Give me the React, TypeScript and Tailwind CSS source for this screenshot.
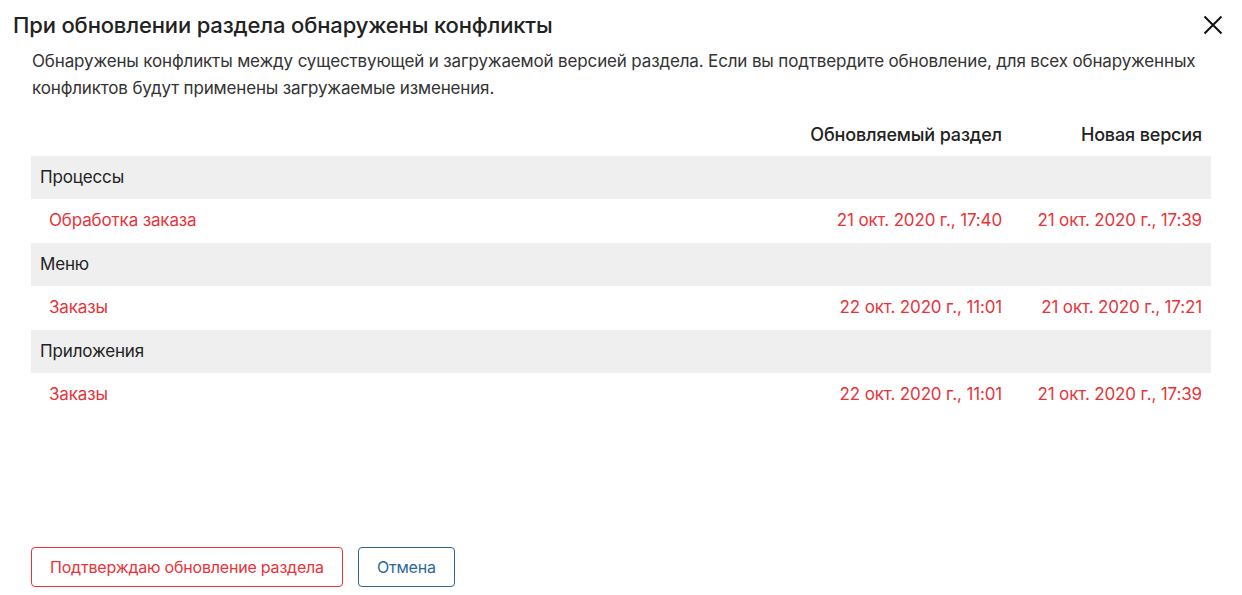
type Item = { name: string; current: string; next: string };
type Group = { title: string; items: Item[] };

const groups: Group[] = [
    {
        title: "Процессы",
        items: [{ name: "Обработка заказа", current: "21 окт. 2020 г., 17:40", next: "21 окт. 2020 г., 17:39" }],
    },
    {
        title: "Меню",
        items: [{ name: "Заказы", current: "22 окт. 2020 г., 11:01", next: "21 окт. 2020 г., 17:21" }],
    },
    {
        title: "Приложения",
        items: [{ name: "Заказы", current: "22 окт. 2020 г., 11:01", next: "21 окт. 2020 г., 17:39" }],
    },
];

export default function App() {
    return (
        <div className="flex h-[595px] w-[1242px] flex-col bg-white font-['Inter',sans-serif] text-[#222]">
            {/* Header */}
            <div className="flex items-center justify-between pl-[13px] pr-[19px] pt-[11px]">
                <h1 className="text-[22px] font-medium leading-[28px] tracking-[-0.15px] text-[#222]">
                    При обновлении раздела обнаружены конфликты
                </h1>
                <button className="text-[#111]">
                    <svg width="20" height="20" viewBox="0 0 20 20" fill="none" stroke="currentColor" strokeWidth="2">
                        <path d="M1.5 1.5 18.5 18.5M18.5 1.5 1.5 18.5" />
                    </svg>
                </button>
            </div>

            {/* Body */}
            <div className="flex-1 px-[31px]">
                <p className="mt-[9px] pl-px text-[17px] leading-[27px] tracking-[-0.15px] text-[#333]">
                    Обнаружены конфликты между существующей и загружаемой версией раздела. Если вы подтвердите обновление, для всех обнаруженных конфликтов будут применены загружаемые изменения.
                </p>

                <table className="mt-[10px] w-full border-collapse text-[17px] tracking-[-0.15px]">
                    <thead>
                        <tr className="h-[44px]">
                            <th className="px-[9px] text-left font-normal"></th>
                            <th className="w-[220px] px-[9px] text-right text-[18px] font-medium text-[#222]">Обновляемый раздел</th>
                            <th className="w-[200px] px-[9px] text-right text-[18px] font-medium text-[#222]">Новая версия</th>
                        </tr>
                    </thead>
                    <tbody>
                        {groups.map((g, i) => (
                            <GroupRows key={i} group={g} />
                        ))}
                    </tbody>
                </table>
            </div>

            {/* Footer */}
            <div className="flex gap-[15px] px-[31px] pb-[8px]">
                <button className="h-[40px] rounded-[4px] border border-[#e8333a] px-[18px] text-[16px] tracking-[-0.2px] text-[#e8333a]">
                    Подтверждаю обновление раздела
                </button>
                <button className="h-[40px] rounded-[4px] border border-[#2a6899] px-[18px] text-[16px] tracking-[-0.2px] text-[#2a6899]">
                    Отмена
                </button>
            </div>
        </div>
    );
}

function GroupRows({ group }: { group: Group }) {
    return (
        <>
            <tr className="h-[43px] bg-[#efefef]">
                <td colSpan={3} className="px-[9px] text-[#222]">
                    {group.title}
                </td>
            </tr>
            {group.items.map((item, j) => (
                <tr key={j} className="h-[44px] text-[#e8333a]">
                    <td className="pl-[18px]">{item.name}</td>
                    <td className="px-[9px] text-right">{item.current}</td>
                    <td className="px-[9px] text-right">{item.next}</td>
                </tr>
            ))}
        </>
    );
}
